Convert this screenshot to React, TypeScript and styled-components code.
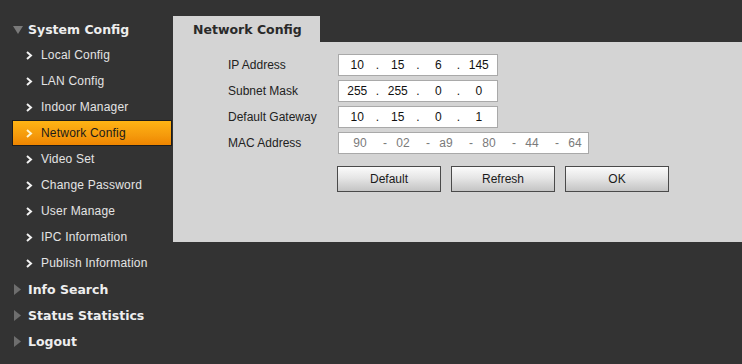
import React from "react";
import styled, { createGlobalStyle } from "styled-components";

const Global = createGlobalStyle`
  html, body { margin: 0; padding: 0; background: #333333; }
  body { font-family: "Liberation Sans", Arial, sans-serif; }
`;

const Page = styled.div`
  display: flex;
  width: 742px;
  height: 364px;
  background: #333333;
  overflow: hidden;
`;

const Sidebar = styled.nav`
  width: 173px;
  flex: none;
  padding-top: 17px;
  display: flex;
  flex-direction: column;
`;

const Header = styled.div<{ $first?: boolean }>`
  height: ${(p) => (p.$first ? 25 : 26)}px;
  display: flex;
  align-items: center;
  padding-left: 13px;
  gap: 5px;
  color: #eeeeee;
  font-family: "DejaVu Sans", Verdana, sans-serif;
  font-weight: bold;
  font-size: 12.5px;
`;

const Item = styled.div<{ $active?: boolean }>`
  height: 26px;
  display: flex;
  align-items: stretch;
`;

const ItemInner = styled.div<{ $active?: boolean }>`
  margin-left: 12px;
  width: 160px;
  box-sizing: border-box;
  height: ${(p) => (p.$active ? 26 : 26)}px;
  display: flex;
  align-items: center;
  padding-left: ${(p) => (p.$active ? 13 : 14)}px;
  gap: 8px;
  font-size: 12px;
  letter-spacing: 0.2px;
  color: ${(p) => (p.$active ? "#1a1a1a" : "#e4e4e4")};
  border: ${(p) => (p.$active ? "1px solid #1c1c1c" : "none")};
  background: ${(p) =>
    p.$active ? "linear-gradient(#ffb414, #f59a0c 60%, #ee8500)" : "transparent"};
`;

const Main = styled.main`
  flex: 1;
  padding-top: 16px;
  display: flex;
  flex-direction: column;
`;

const TabRow = styled.div`
  height: 26px;
  display: flex;
`;

const Tab = styled.div`
  width: 147px;
  background: #d4d4d4;
  display: flex;
  align-items: center;
  padding-left: 20px;
  box-sizing: border-box;
  font-family: "DejaVu Sans", Verdana, sans-serif;
  font-weight: bold;
  font-size: 12.5px;
  color: #2a2a2a;
`;

const Body = styled.section`
  height: 200px;
  background: #d4d4d4;
  padding: 12px 0 0 55px;
  box-sizing: border-box;
  display: flex;
  flex-direction: column;
  gap: 4px;
`;

const Row = styled.div`
  display: flex;
  align-items: center;
  height: 22px;
`;

const Label = styled.div`
  width: 110px;
  font-size: 12px;
  color: #222;
`;

const Field = styled.div<{ $wide?: boolean; $disabled?: boolean }>`
  width: ${(p) => (p.$wide ? 251 : 160)}px;
  height: 22px;
  box-sizing: border-box;
  border: 1px solid #a9a9a9;
  background: #fff;
  display: flex;
  align-items: center;
  padding-left: ${(p) => (p.$wide ? 8 : 0)}px;
  font-size: 12px;
  color: ${(p) => (p.$disabled ? "#7a7a7a" : "#111")};
`;

const Seg = styled.span<{ $w: number }>`
  width: ${(p) => p.$w}px;
  text-align: center;
`;

const Sep = styled.span<{ $w: number; $right?: boolean }>`
  width: ${(p) => p.$w}px;
  text-align: ${(p) => (p.$right ? "right" : "center")};
  padding-right: ${(p) => (p.$right ? 3 : 0)}px;
  box-sizing: border-box;
`;

const Buttons = styled.div`
  display: flex;
  gap: 10px;
  margin-top: 8px;
  margin-left: 109px;
`;

const Button = styled.button`
  width: 104px;
  height: 26px;
  border: 1px solid #4a4a4a;
  background: linear-gradient(#fbfbfb, #e6e6e6 45%, #c4c4c4);
  font-family: "Liberation Sans", Arial, sans-serif;
  font-size: 12px;
  color: #1a1a1a;
  padding: 0;
`;

const Chevron = ({ color }: { color: string }) => (
  <svg width="7" height="9" viewBox="0 0 7 9">
    <polyline points="1,1 5,4.5 1,8" fill="none" stroke={color} strokeWidth="2" />
  </svg>
);

const TriDown = () => (
  <svg width="10" height="8" viewBox="0 0 10 8">
    <polygon points="0,0 10,0 5,8" fill="#7a7a7a" />
  </svg>
);

const TriRight = () => (
  <svg width="10" height="11" viewBox="0 0 10 11">
    <polygon points="1,0 8,5.5 1,11" fill="#6e6e6e" />
  </svg>
);

const subItems = [
  "Local Config",
  "LAN Config",
  "Indoor Manager",
  "Network Config",
  "Video Set",
  "Change Password",
  "User Manage",
  "IPC Information",
  "Publish Information",
];

const IpField = ({ parts }: { parts: string[] }) => (
  <Field>
    {parts.map((p, i) => (
      <React.Fragment key={i}>
        {i > 0 && <Sep $w={4}>.</Sep>}
        <Seg $w={37}>{p}</Seg>
      </React.Fragment>
    ))}
  </Field>
);

const MacField = ({ parts }: { parts: string[] }) => (
  <Field $wide $disabled>
    {parts.map((p, i) => (
      <React.Fragment key={i}>
        {i > 0 && <Sep $w={17} $right>-</Sep>}
        <Seg $w={26}>{p}</Seg>
      </React.Fragment>
    ))}
  </Field>
);

export default function App() {
  return (
    <Page>
      <Global />
      <Sidebar>
        <Header $first>
          <TriDown />
          System Config
        </Header>
        {subItems.map((s) => {
          const active = s === "Network Config";
          return (
            <Item key={s}>
              <ItemInner $active={active}>
                <Chevron color={active ? "#fff6d0" : "#f2f2f2"} />
                {s}
              </ItemInner>
            </Item>
          );
        })}
        <Header>
          <TriRight />
          Info Search
        </Header>
        <Header>
          <TriRight />
          Status Statistics
        </Header>
        <Header>
          <TriRight />
          Logout
        </Header>
      </Sidebar>
      <Main>
        <TabRow>
          <Tab>Network Config</Tab>
        </TabRow>
        <Body>
          <Row>
            <Label>IP Address</Label>
            <IpField parts={["10", "15", "6", "145"]} />
          </Row>
          <Row>
            <Label>Subnet Mask</Label>
            <IpField parts={["255", "255", "0", "0"]} />
          </Row>
          <Row>
            <Label>Default Gateway</Label>
            <IpField parts={["10", "15", "0", "1"]} />
          </Row>
          <Row>
            <Label>MAC Address</Label>
            <MacField parts={["90", "02", "a9", "80", "44", "64"]} />
          </Row>
          <Buttons>
            <Button>Default</Button>
            <Button>Refresh</Button>
            <Button>OK</Button>
          </Buttons>
        </Body>
      </Main>
    </Page>
  );
}
